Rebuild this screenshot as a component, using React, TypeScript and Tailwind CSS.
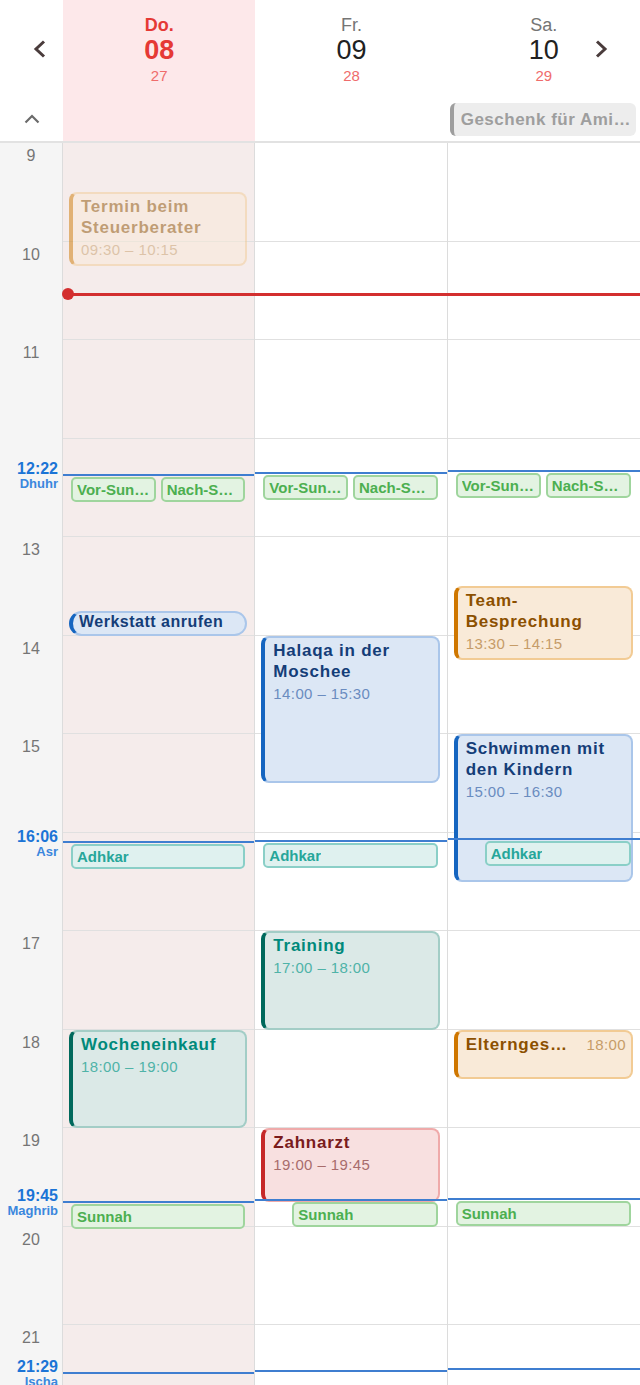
import React from "react";

const HOUR = 98.5;
const START = 9;
const HOURS = Array.from({ length: 15 }, (_, i) => START + i);

const pos = (t: string) => {
  const [h, m] = t.split(":").map(Number);
  return (h - START + m / 60) * HOUR;
};

type Tone = "blue" | "orange" | "teal" | "red";

const TONES: Record<Tone, { box: string; title: string; time: string }> = {
  blue: {
    box: "bg-[#dce7f5] border-[#aac6ea] border-l-[#1565c0]",
    title: "text-[#143d78]",
    time: "text-[#6a8cc0]",
  },
  orange: {
    box: "bg-[#f9ead8] border-[#f2cb94] border-l-[#cf7700]",
    title: "text-[#8c5000]",
    time: "text-[#c69c68]",
  },
  teal: {
    box: "bg-[#dbe9e7] border-[#a3cdc6] border-l-[#00695c]",
    title: "text-[#00897b]",
    time: "text-[#4fb3a8]",
  },
  red: {
    box: "bg-[#f8e0e0] border-[#efaaaa] border-l-[#c62828]",
    title: "text-[#7a1c1c]",
    time: "text-[#a86c6c]",
  },
};

type ChipTone = "green" | "teal";
const CHIPS: Record<ChipTone, string> = {
  green: "bg-[#e3f3e2] border-[#9fd59d] text-[#4caf50]",
  teal: "bg-[#dff1ef] border-[#8acfc7] text-[#26a69a]",
};

type CalEvent = {
  title: string;
  start: string;
  end: string;
  tone: Tone;
  past?: boolean;
  kind?: "pill" | "inline";
};

type Prayer = {
  name: string;
  time: string;
  chips: string[];
  tone: ChipTone;
  indent?: boolean;
};

type Day = {
  short: string;
  num: string;
  hijri: string;
  today?: boolean;
  allDay?: string;
  events: CalEvent[];
  prayers: Prayer[];
};

const dhuhrChips = ["Vor-Sunnah", "Nach-Sunnah"];

const DAYS: Day[] = [
  {
    short: "Do.",
    num: "08",
    hijri: "27",
    today: true,
    events: [
      { title: "Termin beim Steuerberater", start: "9:30", end: "10:15", tone: "orange", past: true },
      { title: "Werkstatt anrufen", start: "13:45", end: "14:00", tone: "blue", kind: "pill" },
      { title: "Wocheneinkauf", start: "18:00", end: "19:00", tone: "teal" },
    ],
    prayers: [
      { name: "Dhuhr", time: "12:22", chips: dhuhrChips, tone: "green" },
      { name: "Asr", time: "16:06", chips: ["Adhkar"], tone: "teal" },
      { name: "Maghrib", time: "19:45", chips: ["Sunnah"], tone: "green" },
      { name: "Ischa", time: "21:29", chips: [], tone: "green" },
    ],
  },
  {
    short: "Fr.",
    num: "09",
    hijri: "28",
    events: [
      { title: "Halaqa in der Moschee", start: "14:00", end: "15:30", tone: "blue" },
      { title: "Training", start: "17:00", end: "18:00", tone: "teal" },
      { title: "Zahnarzt", start: "19:00", end: "19:45", tone: "red" },
    ],
    prayers: [
      { name: "Dhuhr", time: "12:21", chips: dhuhrChips, tone: "green" },
      { name: "Asr", time: "16:05", chips: ["Adhkar"], tone: "teal" },
      { name: "Maghrib", time: "19:44", chips: ["Sunnah"], tone: "green", indent: true },
      { name: "Ischa", time: "21:28", chips: [], tone: "green" },
    ],
  },
  {
    short: "Sa.",
    num: "10",
    hijri: "29",
    allDay: "Geschenk für Aminas Geburtstag",
    events: [
      { title: "Team-Besprechung", start: "13:30", end: "14:15", tone: "orange" },
      { title: "Schwimmen mit den Kindern", start: "15:00", end: "16:30", tone: "blue" },
      { title: "Elterngespräch", start: "18:00", end: "18:30", tone: "orange", kind: "inline" },
    ],
    prayers: [
      { name: "Dhuhr", time: "12:20", chips: dhuhrChips, tone: "green" },
      { name: "Asr", time: "16:04", chips: ["Adhkar"], tone: "teal", indent: true },
      { name: "Maghrib", time: "19:43", chips: ["Sunnah"], tone: "green" },
      { name: "Ischa", time: "21:27", chips: [], tone: "green" },
    ],
  },
];

const NOW = "10:32";

// An hour label gives way to a prayer label that sits close below that hour.
const hiddenHours = new Set(
  DAYS[0].prayers
    .map((p) => p.time.split(":").map(Number))
    .filter(([, m]) => m < 25)
    .map(([h]) => h)
);

function ChevronLeft() {
  return (
    <svg width="13" height="18" viewBox="0 0 13 18" fill="none">
      <path d="M11 1.5 L3 9 L11 16.5" stroke="#4a3c3c" strokeWidth="3" />
    </svg>
  );
}

function ChevronRight() {
  return (
    <svg width="13" height="18" viewBox="0 0 13 18" fill="none">
      <path d="M2 1.5 L10 9 L2 16.5" stroke="#4a3c3c" strokeWidth="3" />
    </svg>
  );
}

function ChevronUp() {
  return (
    <svg width="16" height="10" viewBox="0 0 16 10" fill="none">
      <path d="M1.5 8.5 L8 2 L14.5 8.5" stroke="#6b6b6b" strokeWidth="2.2" />
    </svg>
  );
}

function range(ev: CalEvent) {
  const pad = (t: string) => {
    const [h, m] = t.split(":");
    return `${h.padStart(2, "0")}:${m}`;
  };
  return `${pad(ev.start)} – ${pad(ev.end)}`;
}

function EventCard({ ev }: { ev: CalEvent }) {
  const top = pos(ev.start);
  const height = pos(ev.end) - top;
  const t = TONES[ev.tone];

  if (ev.kind === "pill") {
    return (
      <div
        className={`absolute left-[6px] right-[7px] rounded-full border-2 border-l-4 pl-[6px] pr-[6px] pt-[1px] ${t.box}`}
        style={{ top, height }}
      >
        <div className={`truncate text-[16px] font-bold leading-[16px] tracking-[0.5px] ${t.title}`}>{ev.title}</div>
      </div>
    );
  }

  if (ev.kind === "inline") {
    return (
      <div
        className={`absolute left-[6px] right-[7px] rounded-[8px] border-2 border-l-4 pl-[8px] pr-[5px] pt-[2px] ${t.box}`}
        style={{ top, height }}
      >
        <div className="flex items-baseline gap-[12px]">
          <span className={`min-w-0 flex-1 truncate text-[17px] font-bold leading-[21px] tracking-[0.75px] ${t.title}`}>
            {ev.title}
          </span>
          <span className={`shrink-0 text-[15px] leading-[20px] tracking-[0.4px] ${t.time}`}>{ev.start}</span>
        </div>
      </div>
    );
  }

  return (
    <div
      className={`absolute left-[6px] right-[7px] overflow-hidden rounded-[8px] border-2 border-l-4 pl-[8px] pr-[6px] pt-[2px] ${t.box} ${
        ev.past ? "opacity-50" : ""
      }`}
      style={{ top, height }}
    >
      <div className={`text-[17px] font-bold leading-[21px] tracking-[0.75px] ${t.title}`}>{ev.title}</div>
      <div className={`mt-[2px] text-[15px] leading-[20px] tracking-[0.4px] ${t.time}`}>{range(ev)}</div>
    </div>
  );
}

function PrayerMark({ p }: { p: Prayer }) {
  const y = pos(p.time);
  return (
    <>
      <div className="absolute left-0 right-0 h-[2px] bg-[#3f7ed0]" style={{ top: y - 1 }} />
      {p.chips.length > 0 && (
        <div
          className={`absolute right-[9px] flex gap-[5px] ${p.indent ? "left-[37px]" : "left-[8px]"}`}
          style={{ top: y + 2 }}
        >
          {p.chips.map((c) => (
            <div
              key={c}
              className={`flex h-[25px] min-w-0 flex-1 items-center rounded-[5px] border-2 pl-[4px] pr-[2px] ${CHIPS[p.tone]}`}
            >
              <span className="truncate text-[15px] font-bold leading-[15px]">{c}</span>
            </div>
          ))}
        </div>
      )}
    </>
  );
}

function DayHeader({ d }: { d: Day }) {
  return (
    <div className={`flex min-w-0 flex-col ${d.today ? "bg-[#fde8ea]" : ""}`}>
      <div className="flex h-[98px] flex-col items-center pt-[15px]">
        <div
          className={`text-[18px] leading-[20px] ${d.today ? "font-bold text-[#e53935]" : "text-[#757575]"}`}
        >
          {d.short}
        </div>
        <div className={`text-[27px] leading-[31px] ${d.today ? "font-bold text-[#e53935]" : "text-[#212121]"}`}>
          {d.num}
        </div>
        <div className="mt-[1px] text-[15px] leading-[18px] text-[#ef6c6c]">{d.hijri}</div>
      </div>
      <div className="flex min-w-0 flex-1 items-center pl-[2px] pr-[4px]">
        {d.allDay && (
          <div className="flex h-[33px] w-full min-w-0 items-center rounded-[6px] border-l-4 border-[#9e9e9e] bg-[#ededed] pl-[7px] pr-[2px]">
            <span className="min-w-0 truncate text-[17px] font-bold tracking-[0.5px] text-[#9e9e9e]">{d.allDay}</span>
          </div>
        )}
      </div>
    </div>
  );
}

export default function App() {
  const today = DAYS[0];
  return (
    <div className="h-[1385px] overflow-hidden bg-white font-['Liberation_Sans',Arial,sans-serif]">
      <header className="relative grid h-[143px] grid-cols-[63px_1fr_1fr_1fr] border-b-2 border-[#e2e2e2]">
        <div className="flex flex-col">
          <div className="h-[98px]" />
          <div className="flex flex-1 items-center justify-center pb-[2px]">
            <ChevronUp />
          </div>
        </div>
        {DAYS.map((d) => (
          <DayHeader key={d.num} d={d} />
        ))}
        <button className="absolute left-[33px] top-[40px]">
          <ChevronLeft />
        </button>
        <button className="absolute right-[32px] top-[40px]">
          <ChevronRight />
        </button>
      </header>

      <main className="relative grid grid-cols-[63px_1fr_1fr_1fr]">
        <div className="relative border-r border-[#dcdcdc] bg-[#f5f5f5]">
          {HOURS.map((h) => (
            <div key={h} className="h-[98.5px] pt-[4px] text-center text-[16px] leading-[18px] text-[#757575]">
              {hiddenHours.has(h) ? "" : h}
            </div>
          ))}
          {today.prayers.map((p) => (
            <div key={p.name} className="absolute right-[4px] text-right" style={{ top: pos(p.time) - 13.5 }}>
              <div className="text-[16px] font-bold leading-[16px] text-[#1b74d6]">{p.time}</div>
              <div className="text-[13px] font-bold leading-[13px] text-[#3b87dd]">{p.name}</div>
            </div>
          ))}
        </div>

        {DAYS.map((d, i) => (
          <div
            key={d.num}
            className={`relative ${i < DAYS.length - 1 ? "border-r border-[#dcdcdc]" : ""} ${
              d.today ? "bg-[#f5eceb]" : "bg-white"
            }`}
          >
            {HOURS.map((h) => (
              <div key={h} className="h-[98.5px] border-b border-[#e0e0e0]" />
            ))}
            {d.events.map((ev) => (
              <EventCard key={ev.title} ev={ev} />
            ))}
            {d.prayers.map((p) => (
              <PrayerMark key={p.name} p={p} />
            ))}
          </div>
        ))}

        <div className="pointer-events-none absolute left-[68px] right-0 h-[3px] bg-[#d32f2f]" style={{ top: pos(NOW) - 1.5 }} />
        <div
          className="pointer-events-none absolute left-[62px] h-[12px] w-[12px] rounded-full bg-[#d32f2f]"
          style={{ top: pos(NOW) - 6 }}
        />
      </main>
    </div>
  );
}
